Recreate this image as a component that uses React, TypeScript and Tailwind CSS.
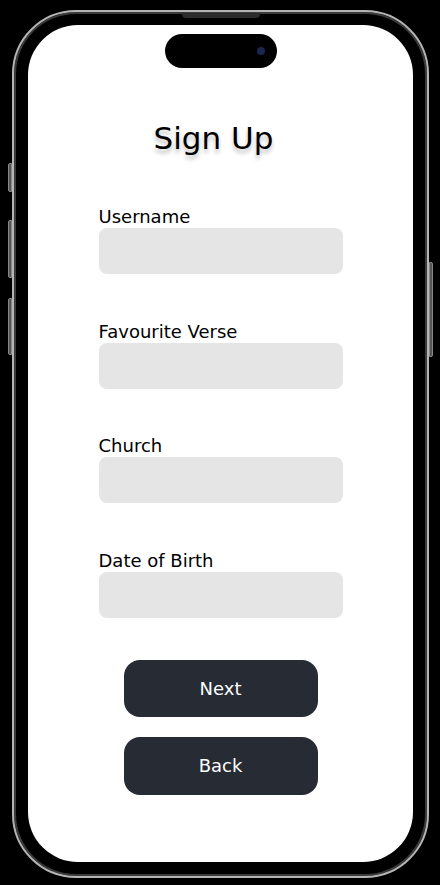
const fields = ["Username", "Favourite Verse", "Church", "Date of Birth"];

export default function App() {
  return (
    <div className="w-[440px] h-[885px] bg-black pt-[10px] font-['DejaVu_Sans',sans-serif]">
      <div className="relative ml-[12px] w-[417px] h-[868px] rounded-[64px] border-2 border-[#b4b4b4] bg-black pt-[13px] px-[14px] pb-[14px] shadow-[inset_0_0_0_2px_#3a3a3a]">
        {/* speaker slot */}
        <div className="absolute left-[168px] top-[1px] w-[78px] h-[5px] rounded-b-[4px] bg-[#2c2c2c]" />
        {/* side buttons */}
        <div className="absolute left-[-6px] top-[151px] w-[4px] h-[29px] rounded-l-[2px] bg-[#555] border border-[#888]" />
        <div className="absolute left-[-6px] top-[208px] w-[4px] h-[58px] rounded-l-[2px] bg-[#555] border border-[#888]" />
        <div className="absolute left-[-6px] top-[286px] w-[4px] h-[57px] rounded-l-[2px] bg-[#555] border border-[#888]" />
        <div className="absolute right-[-6px] top-[250px] w-[4px] h-[95px] rounded-r-[2px] bg-[#555] border border-[#888]" />

        <div className="h-full rounded-[50px] bg-white flex flex-col items-center">
          <div className="mt-[9px] w-[112px] h-[34px] rounded-full bg-black flex items-center justify-end pr-[12px]">
            <div className="w-[8px] h-[8px] rounded-full bg-[#1c2450]" />
          </div>

          <h1 className="mt-[52px] pr-[14px] text-[31px] leading-[36px] text-black [text-shadow:0_4px_4px_rgba(0,0,0,0.25)]">
            Sign Up
          </h1>

          <div className="mt-[50px] flex flex-col gap-[46.5px]">
            {fields.map((f) => (
              <div key={f} className="flex flex-col">
                <label className="text-[18px] leading-[22px] text-black">{f}</label>
                <input className="w-[244px] h-[46px] rounded-[8px] bg-[#e5e5e5] outline-none px-3" />
              </div>
            ))}
          </div>

          <div className="mt-[42px] flex flex-col gap-[20px]">
            <button className="w-[194px] h-[57px] rounded-[16px] bg-[#272b34] text-white text-[18px]">
              Next
            </button>
            <button className="w-[194px] h-[58px] rounded-[16px] bg-[#272b34] text-white text-[18px]">
              Back
            </button>
          </div>
        </div>
      </div>
    </div>
  );
}
